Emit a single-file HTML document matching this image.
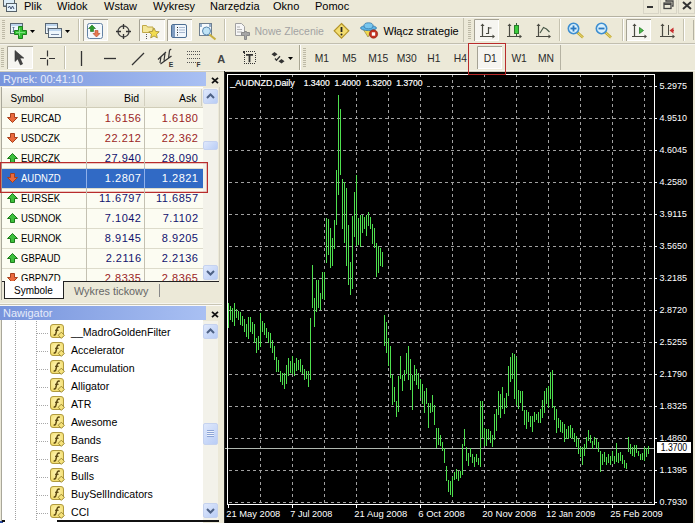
<!DOCTYPE html>
<html><head><meta charset="utf-8">
<style>
*{margin:0;padding:0;box-sizing:border-box}
html,body{width:695px;height:523px;overflow:hidden;background:#ece9d8;font-family:"Liberation Sans",sans-serif;font-size:11px;color:#000}
.abs{position:absolute}
.mi{position:absolute;top:0;height:15px;line-height:13px;font-size:11px}
.hline{position:absolute;left:0;width:695px;height:1px}
.grip{position:absolute;width:3px;background:repeating-linear-gradient(to bottom,#c1bda8 0 1px,transparent 1px 2px)}
.sep{position:absolute;width:1px;background:#c5c2b2;border-right:1px solid #fff}
.btnp{position:absolute;background:#f7f6f1;border:1px solid #d6d3c2}
.tf{position:absolute;top:52px;font-size:10px;line-height:12px;color:#222;letter-spacing:.3px}
.title{position:absolute;left:0;width:206px;height:14px;background:linear-gradient(to right,#7794dc,#a9c0f3);color:#e6ecfa;font-size:11px;line-height:13px;padding-left:3px;padding-top:1px}
.xclose{position:absolute;left:211px;font-size:11px;font-weight:bold;line-height:8px}
.row{position:absolute;left:2px;width:201px;height:20px;background:#fcfcf2}
.row .ar{position:absolute;left:5px;top:5px;line-height:0}
.row .sy{position:absolute;left:19px;top:5px;font-size:10px;line-height:12px;color:#000;transform:scaleX(.95);transform-origin:0 0}
.row .bid,.row .ask{position:absolute;top:4px;font-size:11px;line-height:12px;text-align:right;letter-spacing:.5px}
.row .bid{right:61.5px}
.row .ask{right:4.5px}
.row.dn .bid,.row.dn .ask{color:#9a2424}
.row.up .bid,.row.up .ask{color:#12126e}
.row.sel{background:#316ac5}
.row.sel .sy,.row.sel .bid,.row.sel .ask{color:#fff}
.vdiv{position:absolute;width:1px;background:#c4c1b2}
.hl{position:absolute;left:2px;width:201px;height:1px;background:#dddbcb;z-index:1}
.sb{position:absolute;left:203px;width:15px;background:#f3f2ea}
.sbb{position:absolute;left:203px;width:15px;height:15px;background:linear-gradient(135deg,#dfe8fb,#b9cdf6);border:1px solid #c5d2ef;border-radius:2px}
.ni{position:absolute;left:50px;height:18px}
.ni .ficon{position:absolute;left:0;top:0;line-height:0}
.ni .nt{position:absolute;left:21px;top:2px;font-size:10.6px;line-height:12px;white-space:nowrap}
.hdots{position:absolute;left:37px;width:12px;height:1px;background:repeating-linear-gradient(to right,#a8a8a8 0 1px,transparent 1px 2px)}
.vdots{position:absolute;width:1px;background:repeating-linear-gradient(to bottom,#a0a0a0 0 1px,transparent 1px 2px)}
</style></head><body>

<!-- menu bar -->
<svg class="abs" style="left:0;top:0" width="18" height="15" viewBox="0 0 18 15"><path d="M3.5 -1v7.5h3" fill="none" stroke="#556068"/><rect x="3.5" y="-2" width="11" height="8" fill="#dcecf7" stroke="#556068"/><rect x="6.5" y="3.5" width="10" height="8" fill="#e4f2fb" stroke="#556068"/><path d="M8 8l1.5-2 1.5 3 1.5-3 1.5 3" fill="none" stroke="#405070"/></svg>
<div class="mi" style="left:24px">Plik</div><div class="mi" style="left:57px">Widok</div><div class="mi" style="left:104px">Wstaw</div><div class="mi" style="left:153px">Wykresy</div><div class="mi" style="left:210px">Narzędzia</div><div class="mi" style="left:273px">Okno</div><div class="mi" style="left:315px">Pomoc</div>
<div class="abs" style="left:643px;top:0;width:16px;height:14px;border:1px solid #d8d5c6;border-top:0"></div>
<div class="abs" style="left:647px;top:6px;width:6px;height:2px;background:#333"></div>
<div class="abs" style="left:660px;top:0;width:17px;height:14px;border:1px solid #d8d5c6;border-top:0"></div>
<svg class="abs" style="left:663px;top:0" width="11" height="10" viewBox="0 0 11 10"><path d="M3 0v1h7v5h-1" fill="none" stroke="#444" stroke-width="1.3"/><rect x="1" y="3" width="7" height="5.5" fill="none" stroke="#444" stroke-width="1.3"/><path d="M1 4.2h7" stroke="#444" stroke-width="1.6"/></svg>
<div class="abs" style="left:678px;top:0;width:17px;height:14px;border:1px solid #d8d5c6;border-top:0"></div>
<svg class="abs" style="left:682px;top:1px" width="10" height="9" viewBox="0 0 10 9"><path d="M1 1l8 7M9 1l-8 7" stroke="#333" stroke-width="2"/></svg>
<div class="hline" style="top:16px;background:#b5b2a2"></div>
<div class="hline" style="top:17px;background:#fbfaf6"></div>

<!-- toolbar 1 -->
<svg class="abs" style="left:0;top:0" width="695" height="72" viewBox="0 0 695 72" font-family="Liberation Sans, sans-serif"><path d="M2 20h3v1h-3zM2 22h3v1h-3zM2 24h3v1h-3zM2 26h3v1h-3zM2 28h3v1h-3zM2 30h3v1h-3zM2 32h3v1h-3zM2 34h3v1h-3zM2 36h3v1h-3zM2 38h3v1h-3z" fill="#bdb9a6"/><rect x="10.5" y="23.5" width="12" height="10" fill="#eef6fb" stroke="#5a6672"/><rect x="11" y="24" width="11" height="2" fill="#bcd4ec"/><path d="M13.5 27v5M12.5 28l1-1 1 1M12.5 31l1 1 1-1" stroke="#5a7090" fill="none" stroke-width=".8"/><path d="M18.5 26.5h4v4h4v4h-4v4h-4v-4h-4v-4h4z" fill="#34c234" stroke="#1e7e1e"/><path d="M19.5 28v8M16 32.5h9" stroke="#7fe07f" stroke-width="1"/><path d="M30 30h5l-2.5 3z" fill="#000"/><rect x="45.5" y="23.5" width="12" height="10" fill="#eef6fb" stroke="#5a6672"/><rect x="46" y="24" width="11" height="2" fill="#bcd4ec"/><path d="M48 27.5v4M48 29.5h7" stroke="#5a7090" stroke-width=".8"/><rect x="48.5" y="28.5" width="13" height="9" fill="#eef6fb" stroke="#5a6672"/><rect x="49" y="29" width="12" height="2" fill="#bcd4ec"/><path d="M51 34.5h8" stroke="#5a7090" stroke-width=".8"/><path d="M65 30h5l-2.5 3z" fill="#000"/><path d="M78.5 19V41" stroke="#c5c2b0"/><path d="M79.5 19V41" stroke="#fff"/><rect x="83" y="19" width="25" height="22" fill="#f6f5f0"/><path d="M83.5 41V19.5H108" stroke="#a5a294" fill="none"/><path d="M84 40.5H107.5V20" stroke="#fff" fill="none"/><rect x="87.5" y="23.5" width="15" height="15" rx="2" fill="#f4f9fd" stroke="#6482a4"/><path d="M92 25l3.5 3.5h-2v3h-3v-3h-2z" fill="#2a9a2a" stroke="#1f6f1f" stroke-width=".6"/><path d="M96.5 37l3.5-3.5h-2v-3h-3v3h-2z" fill="#e87a50" stroke="#b04a2a" stroke-width=".6"/><circle cx="123.5" cy="31.5" r="5.5" fill="none" stroke="#444" stroke-width="1.3"/><path d="M123.5 24v5M123.5 34v5M116 31.5h5M126 31.5h5" stroke="#333" stroke-width="1.3"/><rect x="139" y="19" width="26" height="22" fill="#f6f5f0"/><path d="M139.5 41V19.5H165" stroke="#a5a294" fill="none"/><path d="M140 40.5H164.5V20" stroke="#fff" fill="none"/><path d="M142.5 25.5h4l1 1.5h5.5v5.5h-10.5z" fill="#f4e79a" stroke="#c0a848"/><path d="M154 28l1.6 3.4 3.6.4-2.7 2.5.8 3.6-3.3-1.9-3.3 1.9.8-3.6-2.7-2.5 3.6-.4z" fill="#f2dc50" stroke="#a08a30" stroke-width=".8"/><path d="M146.5 34v1M146.5 36v1M146.5 38v1" stroke="#555"/><rect x="167" y="19" width="25" height="22" fill="#f6f5f0"/><path d="M167.5 41V19.5H192" stroke="#a5a294" fill="none"/><path d="M168 40.5H191.5V20" stroke="#fff" fill="none"/><rect x="171.5" y="24.5" width="15" height="13" rx="1.5" fill="#f0f6fc" stroke="#4c6d92"/><rect x="172" y="25" width="3" height="12" fill="#7f9cc0"/><path d="M177 27.5h1M177 30h1M177 32.5h1M177 35h1" stroke="#222"/><path d="M179 27.5h6M179 30h6M179 32.5h6" stroke="#a8b8d0"/><rect x="199.5" y="23.5" width="12" height="12" fill="#f4f9fd" stroke="#708090"/><path d="M201 24v3M210 24v3" stroke="#3a6aa0"/><circle cx="206.5" cy="31" r="4" fill="#bfe3f6" stroke="#5a88b0"/><path d="M209.5 34.5l6 5" stroke="#c8b040" stroke-width="2.2"/><path d="M224.5 19V41" stroke="#c5c2b0"/><path d="M225.5 19V41" stroke="#fff"/><path d="M235.5 23.5h6l3 3v9h-9z" fill="#f6f6f6" stroke="#a0a0a0"/><path d="M237 27h3M237 29.5h5M237 32h5" stroke="#b0b0b0"/><path d="M241.5 32.5h3v-1h2v1h3v3h-3v4h-2v-4h-3z" fill="#a6a6a6" stroke="#8a8a8a"/><text x="254.5" y="34.5" font-size="10.5" fill="#a3a3a3">Nowe Zlecenie</text><path d="M341.5 23.5l7.3 7.3-7.3 7.3-7.3-7.3z" fill="#f3dd70" stroke="#b39428" stroke-width="1.2"/><path d="M341.5 27v5" stroke="#222" stroke-width="1.8"/><circle cx="341.5" cy="34.5" r="1" fill="#222"/><path d="M363 29l5 8 5-8z" fill="#f0d850" stroke="#8a7a30" stroke-width=".6"/><ellipse cx="368.5" cy="28" rx="8" ry="2.6" fill="#5ab4e6" stroke="#3a7aaa" stroke-width=".8"/><ellipse cx="368.5" cy="25.8" rx="4.5" ry="3" fill="#78c6ee" stroke="#3a7aaa" stroke-width=".8"/><circle cx="373.5" cy="34" r="4.2" fill="#c03020" stroke="#902010" stroke-width=".6"/><rect x="371.8" y="32.3" width="3.4" height="3.4" fill="#fff"/><text x="383.5" y="34.5" font-size="11" fill="#000">Włącz strategie</text><path d="M463.5 18V42" stroke="#c5c2b0"/><path d="M468 20h3v1h-3zM468 22h3v1h-3zM468 24h3v1h-3zM468 26h3v1h-3zM468 28h3v1h-3zM468 30h3v1h-3zM468 32h3v1h-3zM468 34h3v1h-3zM468 36h3v1h-3zM468 38h3v1h-3z" fill="#bdb9a6"/><rect x="474" y="19" width="25" height="22" fill="#f6f5f0"/><path d="M474.5 41V19.5H499" stroke="#a5a294" fill="none"/><path d="M475 40.5H498.5V20" stroke="#fff" fill="none"/><path d="M482.5 25V37M480 36.5H494" stroke="#4a4a42" stroke-width="1.2"/><path d="M482.5 23.5l-2 2.5h4z" fill="#4a4a42"/><path d="M495 36.5l-2.5-2v4z" fill="#4a4a42"/><path d="M488.5 27v7M486 33.5h2.5M488.5 28h3" stroke="#4a4a42" stroke-width="1.2"/><path d="M509.5 25V37M507 36.5H521" stroke="#4a4a42" stroke-width="1.2"/><path d="M509.5 23.5l-2 2.5h4z" fill="#4a4a42"/><path d="M522 36.5l-2.5-2v4z" fill="#4a4a42"/><path d="M516.5 23v13" stroke="#3a5a3a"/><rect x="514.5" y="25.5" width="4" height="8" fill="#3ccc3c" stroke="#2a7a2a"/><path d="M538.5 25V37M536 36.5H550" stroke="#4a4a42" stroke-width="1.2"/><path d="M538.5 23.5l-2 2.5h4z" fill="#4a4a42"/><path d="M551 36.5l-2.5-2v4z" fill="#4a4a42"/><path d="M540 33l3.5-5.5 3 1.5 3 3" fill="none" stroke="#4a5a4a" stroke-width="1.2"/><path d="M559.5 19V41" stroke="#c5c2b0"/><path d="M560.5 19V41" stroke="#fff"/><path d="M577.0 32.0l6 5.5" stroke="#c2aa30" stroke-width="2.6"/><path d="M577.0 32.0l6 5.5" stroke="#eede80" stroke-width="1"/><circle cx="573.5" cy="28.5" r="5.2" fill="#d8effb" stroke="#3d8ed0" stroke-width="1.6"/><path d="M570.5 28.5h6" stroke="#2a78c0" stroke-width="1.8"/><path d="M573.5 25.5v6" stroke="#2a78c0" stroke-width="1.8"/><path d="M605.0 32.0l6 5.5" stroke="#c2aa30" stroke-width="2.6"/><path d="M605.0 32.0l6 5.5" stroke="#eede80" stroke-width="1"/><circle cx="601.5" cy="28.5" r="5.2" fill="#d8effb" stroke="#3d8ed0" stroke-width="1.6"/><path d="M598.5 28.5h6" stroke="#2a78c0" stroke-width="1.8"/><path d="M622.5 19V41" stroke="#c5c2b0"/><path d="M623.5 19V41" stroke="#fff"/><rect x="626" y="19" width="25" height="22" fill="#f6f5f0"/><path d="M626.5 41V19.5H651" stroke="#a5a294" fill="none"/><path d="M627 40.5H650.5V20" stroke="#fff" fill="none"/><path d="M634.5 25V37M632 36.5H646" stroke="#4a4a42" stroke-width="1.2"/><path d="M634.5 23.5l-2 2.5h4z" fill="#4a4a42"/><path d="M647 36.5l-2.5-2v4z" fill="#4a4a42"/><path d="M639.5 27.5l4 3-4 3z" fill="#48b848" stroke="#2a7a2a" stroke-width=".8"/><path d="M662.5 25V37M660 36.5H674" stroke="#4a4a42" stroke-width="1.2"/><path d="M662.5 23.5l-2 2.5h4z" fill="#4a4a42"/><path d="M675 36.5l-2.5-2v4z" fill="#4a4a42"/><path d="M669.5 30.5l4-3v6z" fill="#c83030"/><path d="M672 30.5h2" stroke="#c83030" stroke-width="1.2"/><path d="M668.5 25v10" stroke="#4a4a42"/><path d="M683.5 19V41" stroke="#c5c2b0"/><path d="M684.5 19V41" stroke="#fff"/><path d="M693.5 20v20" stroke="#b5b2a2"/><path d="M1 48h3v1h-3zM1 50h3v1h-3zM1 52h3v1h-3zM1 54h3v1h-3zM1 56h3v1h-3zM1 58h3v1h-3zM1 60h3v1h-3zM1 62h3v1h-3zM1 64h3v1h-3zM1 66h3v1h-3z" fill="#bdb9a6"/><rect x="7" y="46" width="26" height="23" fill="#f6f5f0"/><path d="M7.5 69V46.5H33" stroke="#a5a294" fill="none"/><path d="M8 68.5H32.5V47" stroke="#fff" fill="none"/><path d="M15 50.5v11l2.8-2.6 2.6 6 2.2-1-2.6-5.8h3.8z" fill="#444" stroke="#333" stroke-width=".6"/><path d="M47.5 50.5v6M47.5 59.5v6M40 58.5h6M49 58.5h6" stroke="#333" stroke-width="1.2"/><path d="M64.5 46V69" stroke="#c5c2b0"/><path d="M65.5 46V69" stroke="#fff"/><path d="M81.5 51V66" stroke="#333" stroke-width="1.3"/><path d="M104 58.5H116" stroke="#333" stroke-width="1.3"/><path d="M132 65L144 53" stroke="#333" stroke-width="1.3"/><path d="M158 59.5L166 52M160.5 64L171.5 56M161 56.5L160 63M165 53.5L164 60.5M169.5 50.5L168.5 58.5M169.5 50.5q.8-1.3 1.8-1" stroke="#333" stroke-width="1.2" fill="none"/><text x="168.7" y="66.6" font-size="6.8" font-weight="bold" fill="#333">E</text><path d="M187 51.5h13M187 54.5h13M187 58.5h13M187 62.5h9" stroke="#555" stroke-dasharray="1 1"/><text x="196.5" y="66.5" font-size="6.5" font-weight="bold" fill="#333">F</text><text x="217.3" y="62.6" font-size="11" font-weight="bold" fill="#444">A</text><path d="M244 51h1v1h-1zM244 63h1v1h-1zM246 51h1v1h-1zM246 63h1v1h-1zM248 51h1v1h-1zM248 63h1v1h-1zM250 51h1v1h-1zM250 63h1v1h-1zM252 51h1v1h-1zM252 63h1v1h-1zM254 51h1v1h-1zM254 63h1v1h-1zM244 53h1v1h-1zM255 53h1v1h-1zM244 55h1v1h-1zM255 55h1v1h-1zM244 57h1v1h-1zM255 57h1v1h-1zM244 59h1v1h-1zM255 59h1v1h-1zM244 61h1v1h-1zM255 61h1v1h-1z" fill="#333"/><path d="M246 54.8h7M249.5 54.8v7.5" stroke="#333" stroke-width="1.8"/><path d="M243 51h2v2h-2z" fill="#333"/><path d="M274.5 52l3 2.3-3 2.3-3-2.3zM281.5 59l3 2.3-3 2.3-3-2.3z" fill="#333"/><path d="M275 58.5l1.5 1.8 3.5-4" stroke="#333" stroke-width="1.3" fill="none"/><path d="M288 57h5l-2.5 3z" fill="#000"/><path d="M299.5 45V70" stroke="#a9a693"/><path d="M300.5 45V70" stroke="#fff"/><path d="M303 48h3v1h-3zM303 50h3v1h-3zM303 52h3v1h-3zM303 54h3v1h-3zM303 56h3v1h-3zM303 58h3v1h-3zM303 60h3v1h-3zM303 62h3v1h-3zM303 64h3v1h-3zM303 66h3v1h-3z" fill="#bdb9a6"/><rect x="477" y="46" width="25" height="23" fill="#f6f5f0"/><path d="M477.5 69V46.5H502" stroke="#a5a294" fill="none"/><path d="M478 68.5H501.5V47" stroke="#fff" fill="none"/><text x="314.7" y="62" font-size="10.3" fill="#2a2a2a">M1</text><text x="342.3" y="62" font-size="10.3" fill="#2a2a2a">M5</text><text x="368.2" y="62" font-size="10.3" fill="#2a2a2a">M15</text><text x="396.7" y="62" font-size="10.3" fill="#2a2a2a">M30</text><text x="427.3" y="62" font-size="10.3" fill="#2a2a2a">H1</text><text x="453.8" y="62" font-size="10.3" fill="#2a2a2a">H4</text><text x="483.7" y="62" font-size="10.3" fill="#2a2a2a">D1</text><text x="511.4" y="62" font-size="10.3" fill="#2a2a2a">W1</text><text x="537.9" y="62" font-size="10.3" fill="#2a2a2a">MN</text><path d="M560.5 45V70" stroke="#b5b2a2"/></svg>
<div class="hline" style="top:43px;background:#c2bfb0"></div>
<div class="hline" style="top:44px;background:#f4f3ec"></div>

<!-- toolbar 2 -->

<div class="hline" style="top:70px;background:#f8f7f0"></div>
<div class="hline" style="top:71px;background:#d0cdbc"></div>

<!-- left dock -->
<div class="abs" style="left:0;top:72px;width:225px;height:451px;background:#ece9d8"></div>
<div class="abs" style="left:1px;top:87px;width:1px;height:213px;background:#a9a79a"></div>
<div class="title" style="top:72px">Rynek: 00:41:10</div>
<svg class="abs" style="left:211px;top:77px" width="8" height="7" viewBox="0 0 8 7"><path d="M1 .8l6 5.4M7 .8l-6 5.4" stroke="#111" stroke-width="1.8"/></svg>
<div class="abs" style="left:2px;top:87px;width:201px;height:21px;background:linear-gradient(#f6f5ec,#e9e7d8);border-top:1px solid #fff;border-bottom:1px solid #d0cdb8"></div>
<div class="abs" style="left:10.5px;top:93px;font-size:10px;line-height:12px">Symbol</div>
<div class="abs" style="left:124px;top:92px;font-size:10.5px;line-height:12px">Bid</div>
<div class="abs" style="left:179px;top:92px;font-size:10.5px;line-height:12px">Ask</div>
<div class="vdiv" style="left:86px;top:89px;height:17px;background:#d2cfbe"></div>
<div class="vdiv" style="left:144px;top:89px;height:17px;background:#d2cfbe"></div>
<div class="vdiv" style="left:201px;top:89px;height:17px;background:#d2cfbe"></div>
<div class="hl" style="top:128px"></div><div class="row dn" style="top:108px"><span class="ar"><svg width="11" height="10" viewBox="0 0 11 10"><path d="M3.5 .5h4v4h3l-5 5-5-5h3z" fill="#ea6a3c" stroke="#a8401c" stroke-width="1"/></svg></span><span class="sy">EURCAD</span><span class="bid">1.6156</span><span class="ask">1.6180</span></div><div class="hl" style="top:148px"></div><div class="row dn" style="top:128px"><span class="ar"><svg width="11" height="10" viewBox="0 0 11 10"><path d="M3.5 .5h4v4h3l-5 5-5-5h3z" fill="#ea6a3c" stroke="#a8401c" stroke-width="1"/></svg></span><span class="sy">USDCZK</span><span class="bid">22.212</span><span class="ask">22.362</span></div><div class="hl" style="top:168px"></div><div class="row up" style="top:148px"><span class="ar"><svg width="11" height="10" viewBox="0 0 11 10"><path d="M3.5 9.5h4v-4h3l-5-5-5 5h3z" fill="#3cbf3c" stroke="#1c7a1c" stroke-width="1"/></svg></span><span class="sy">EURCZK</span><span class="bid">27.940</span><span class="ask">28.090</span></div><div class="hl" style="top:188px"></div><div class="row sel dn" style="top:168px"><span class="ar"><svg width="11" height="10" viewBox="0 0 11 10"><path d="M3.5 .5h4v4h3l-5 5-5-5h3z" fill="#ea6a3c" stroke="#a8401c" stroke-width="1"/></svg></span><span class="sy">AUDNZD</span><span class="bid">1.2807</span><span class="ask">1.2821</span></div><div class="hl" style="top:208px"></div><div class="row up" style="top:188px"><span class="ar"><svg width="11" height="10" viewBox="0 0 11 10"><path d="M3.5 9.5h4v-4h3l-5-5-5 5h3z" fill="#3cbf3c" stroke="#1c7a1c" stroke-width="1"/></svg></span><span class="sy">EURSEK</span><span class="bid">11.6797</span><span class="ask">11.6857</span></div><div class="hl" style="top:228px"></div><div class="row up" style="top:208px"><span class="ar"><svg width="11" height="10" viewBox="0 0 11 10"><path d="M3.5 9.5h4v-4h3l-5-5-5 5h3z" fill="#3cbf3c" stroke="#1c7a1c" stroke-width="1"/></svg></span><span class="sy">USDNOK</span><span class="bid">7.1042</span><span class="ask">7.1102</span></div><div class="hl" style="top:248px"></div><div class="row up" style="top:228px"><span class="ar"><svg width="11" height="10" viewBox="0 0 11 10"><path d="M3.5 9.5h4v-4h3l-5-5-5 5h3z" fill="#3cbf3c" stroke="#1c7a1c" stroke-width="1"/></svg></span><span class="sy">EURNOK</span><span class="bid">8.9145</span><span class="ask">8.9205</span></div><div class="hl" style="top:268px"></div><div class="row up" style="top:248px"><span class="ar"><svg width="11" height="10" viewBox="0 0 11 10"><path d="M3.5 9.5h4v-4h3l-5-5-5 5h3z" fill="#3cbf3c" stroke="#1c7a1c" stroke-width="1"/></svg></span><span class="sy">GBPAUD</span><span class="bid">2.2116</span><span class="ask">2.2136</span></div><div class="row dn" style="top:268px"><span class="ar"><svg width="11" height="10" viewBox="0 0 11 10"><path d="M3.5 .5h4v4h3l-5 5-5-5h3z" fill="#ea6a3c" stroke="#a8401c" stroke-width="1"/></svg></span><span class="sy">GBPNZD</span><span class="bid">2.8335</span><span class="ask">2.8365</span></div>
<div class="vdiv" style="left:86px;top:108px;height:173px;z-index:2"></div>
<div class="vdiv" style="left:144px;top:108px;height:173px;z-index:2"></div>
<div class="sb" style="top:88px;height:193px"></div>
<div class="sbb" style="top:89px"></div>
<svg class="abs" style="left:206px;top:93px" width="9" height="6" viewBox="0 0 9 6"><path d="M1 5l3.5-3.5L8 5" fill="none" stroke="#4d6185" stroke-width="2"/></svg>
<div class="sbb" style="top:141px;height:9px"></div>
<div class="sbb" style="top:265px"></div>
<svg class="abs" style="left:206px;top:270px" width="9" height="6" viewBox="0 0 9 6"><path d="M1 1l3.5 3.5L8 1" fill="none" stroke="#4d6185" stroke-width="2"/></svg>
<div class="abs" style="left:219px;top:87px;width:1px;height:194px;background:#d4d1c2"></div>
<!-- tabs -->
<div class="abs" style="left:2px;top:281px;width:217px;height:19px;background:#ece9d8;border-top:1px solid #222"></div>
<div class="abs" style="left:4px;top:281px;width:60px;height:18px;background:#fff;border:1px solid #222;border-top:0"></div>
<div class="abs" style="left:14px;top:285px;font-size:10px;line-height:12px">Symbole</div>
<div class="abs" style="left:74px;top:285px;font-size:10.8px;line-height:12px;color:#666">Wykres tickowy</div>
<div class="abs" style="left:159px;top:284px;width:1px;height:13px;background:#888"></div>
<div class="hline" style="top:303px;width:222px;background:#f6f5ee"></div>
<div class="hline" style="top:304px;width:222px;background:#c8c5b4"></div>
<div class="hline" style="top:305px;width:222px;background:#fbfaf6"></div>

<!-- navigator -->
<div class="title" style="top:306px">Nawigator</div>
<svg class="abs" style="left:211px;top:311px" width="8" height="7" viewBox="0 0 8 7"><path d="M1 .8l6 5.4M7 .8l-6 5.4" stroke="#111" stroke-width="1.8"/></svg>
<div class="abs" style="left:1px;top:320px;width:202px;height:203px;background:#fff;border-left:1px solid #a9a79a"></div>
<div class="vdots" style="left:15px;top:321px;height:199px"></div>
<div class="vdots" style="left:36px;top:321px;height:199px"></div>
<div class="ni" style="top:324px"><span class="ficon"><svg width="16" height="16" viewBox="0 0 16 16"><defs><radialGradient id="fg" cx=".45" cy=".4" r=".7"><stop offset="0" stop-color="#fff6b8"/><stop offset="1" stop-color="#f0d860"/></radialGradient></defs><rect x=".5" y=".5" width="13" height="13" rx="2.5" fill="url(#fg)" stroke="#b09a40"/><path d="M9.8 3.3c-1.2-.6-2.3 0-2.7 1.3L5.8 9.8c-.3 1-1.1 1.4-2.1 1" stroke="#5c4810" stroke-width="1.5" fill="none"/><path d="M5 6.3h3.6" stroke="#5c4810" stroke-width="1.2"/><path d="M11.3 8.2l3.1 3.1-3.1 3.1-3.1-3.1z" fill="#f6e27a" stroke="#9c8a38"/></svg></span><span class="nt">__MadroGoldenFilter</span></div><div class="hdots" style="top:333px"></div><div class="ni" style="top:342px"><span class="ficon"><svg width="16" height="16" viewBox="0 0 16 16"><defs><radialGradient id="fg" cx=".45" cy=".4" r=".7"><stop offset="0" stop-color="#fff6b8"/><stop offset="1" stop-color="#f0d860"/></radialGradient></defs><rect x=".5" y=".5" width="13" height="13" rx="2.5" fill="url(#fg)" stroke="#b09a40"/><path d="M9.8 3.3c-1.2-.6-2.3 0-2.7 1.3L5.8 9.8c-.3 1-1.1 1.4-2.1 1" stroke="#5c4810" stroke-width="1.5" fill="none"/><path d="M5 6.3h3.6" stroke="#5c4810" stroke-width="1.2"/><path d="M11.3 8.2l3.1 3.1-3.1 3.1-3.1-3.1z" fill="#f6e27a" stroke="#9c8a38"/></svg></span><span class="nt">Accelerator</span></div><div class="hdots" style="top:351px"></div><div class="ni" style="top:360px"><span class="ficon"><svg width="16" height="16" viewBox="0 0 16 16"><defs><radialGradient id="fg" cx=".45" cy=".4" r=".7"><stop offset="0" stop-color="#fff6b8"/><stop offset="1" stop-color="#f0d860"/></radialGradient></defs><rect x=".5" y=".5" width="13" height="13" rx="2.5" fill="url(#fg)" stroke="#b09a40"/><path d="M9.8 3.3c-1.2-.6-2.3 0-2.7 1.3L5.8 9.8c-.3 1-1.1 1.4-2.1 1" stroke="#5c4810" stroke-width="1.5" fill="none"/><path d="M5 6.3h3.6" stroke="#5c4810" stroke-width="1.2"/><path d="M11.3 8.2l3.1 3.1-3.1 3.1-3.1-3.1z" fill="#f6e27a" stroke="#9c8a38"/></svg></span><span class="nt">Accumulation</span></div><div class="hdots" style="top:369px"></div><div class="ni" style="top:378px"><span class="ficon"><svg width="16" height="16" viewBox="0 0 16 16"><defs><radialGradient id="fg" cx=".45" cy=".4" r=".7"><stop offset="0" stop-color="#fff6b8"/><stop offset="1" stop-color="#f0d860"/></radialGradient></defs><rect x=".5" y=".5" width="13" height="13" rx="2.5" fill="url(#fg)" stroke="#b09a40"/><path d="M9.8 3.3c-1.2-.6-2.3 0-2.7 1.3L5.8 9.8c-.3 1-1.1 1.4-2.1 1" stroke="#5c4810" stroke-width="1.5" fill="none"/><path d="M5 6.3h3.6" stroke="#5c4810" stroke-width="1.2"/><path d="M11.3 8.2l3.1 3.1-3.1 3.1-3.1-3.1z" fill="#f6e27a" stroke="#9c8a38"/></svg></span><span class="nt">Alligator</span></div><div class="hdots" style="top:387px"></div><div class="ni" style="top:396px"><span class="ficon"><svg width="16" height="16" viewBox="0 0 16 16"><defs><radialGradient id="fg" cx=".45" cy=".4" r=".7"><stop offset="0" stop-color="#fff6b8"/><stop offset="1" stop-color="#f0d860"/></radialGradient></defs><rect x=".5" y=".5" width="13" height="13" rx="2.5" fill="url(#fg)" stroke="#b09a40"/><path d="M9.8 3.3c-1.2-.6-2.3 0-2.7 1.3L5.8 9.8c-.3 1-1.1 1.4-2.1 1" stroke="#5c4810" stroke-width="1.5" fill="none"/><path d="M5 6.3h3.6" stroke="#5c4810" stroke-width="1.2"/><path d="M11.3 8.2l3.1 3.1-3.1 3.1-3.1-3.1z" fill="#f6e27a" stroke="#9c8a38"/></svg></span><span class="nt">ATR</span></div><div class="hdots" style="top:405px"></div><div class="ni" style="top:414px"><span class="ficon"><svg width="16" height="16" viewBox="0 0 16 16"><defs><radialGradient id="fg" cx=".45" cy=".4" r=".7"><stop offset="0" stop-color="#fff6b8"/><stop offset="1" stop-color="#f0d860"/></radialGradient></defs><rect x=".5" y=".5" width="13" height="13" rx="2.5" fill="url(#fg)" stroke="#b09a40"/><path d="M9.8 3.3c-1.2-.6-2.3 0-2.7 1.3L5.8 9.8c-.3 1-1.1 1.4-2.1 1" stroke="#5c4810" stroke-width="1.5" fill="none"/><path d="M5 6.3h3.6" stroke="#5c4810" stroke-width="1.2"/><path d="M11.3 8.2l3.1 3.1-3.1 3.1-3.1-3.1z" fill="#f6e27a" stroke="#9c8a38"/></svg></span><span class="nt">Awesome</span></div><div class="hdots" style="top:423px"></div><div class="ni" style="top:432px"><span class="ficon"><svg width="16" height="16" viewBox="0 0 16 16"><defs><radialGradient id="fg" cx=".45" cy=".4" r=".7"><stop offset="0" stop-color="#fff6b8"/><stop offset="1" stop-color="#f0d860"/></radialGradient></defs><rect x=".5" y=".5" width="13" height="13" rx="2.5" fill="url(#fg)" stroke="#b09a40"/><path d="M9.8 3.3c-1.2-.6-2.3 0-2.7 1.3L5.8 9.8c-.3 1-1.1 1.4-2.1 1" stroke="#5c4810" stroke-width="1.5" fill="none"/><path d="M5 6.3h3.6" stroke="#5c4810" stroke-width="1.2"/><path d="M11.3 8.2l3.1 3.1-3.1 3.1-3.1-3.1z" fill="#f6e27a" stroke="#9c8a38"/></svg></span><span class="nt">Bands</span></div><div class="hdots" style="top:441px"></div><div class="ni" style="top:450px"><span class="ficon"><svg width="16" height="16" viewBox="0 0 16 16"><defs><radialGradient id="fg" cx=".45" cy=".4" r=".7"><stop offset="0" stop-color="#fff6b8"/><stop offset="1" stop-color="#f0d860"/></radialGradient></defs><rect x=".5" y=".5" width="13" height="13" rx="2.5" fill="url(#fg)" stroke="#b09a40"/><path d="M9.8 3.3c-1.2-.6-2.3 0-2.7 1.3L5.8 9.8c-.3 1-1.1 1.4-2.1 1" stroke="#5c4810" stroke-width="1.5" fill="none"/><path d="M5 6.3h3.6" stroke="#5c4810" stroke-width="1.2"/><path d="M11.3 8.2l3.1 3.1-3.1 3.1-3.1-3.1z" fill="#f6e27a" stroke="#9c8a38"/></svg></span><span class="nt">Bears</span></div><div class="hdots" style="top:459px"></div><div class="ni" style="top:468px"><span class="ficon"><svg width="16" height="16" viewBox="0 0 16 16"><defs><radialGradient id="fg" cx=".45" cy=".4" r=".7"><stop offset="0" stop-color="#fff6b8"/><stop offset="1" stop-color="#f0d860"/></radialGradient></defs><rect x=".5" y=".5" width="13" height="13" rx="2.5" fill="url(#fg)" stroke="#b09a40"/><path d="M9.8 3.3c-1.2-.6-2.3 0-2.7 1.3L5.8 9.8c-.3 1-1.1 1.4-2.1 1" stroke="#5c4810" stroke-width="1.5" fill="none"/><path d="M5 6.3h3.6" stroke="#5c4810" stroke-width="1.2"/><path d="M11.3 8.2l3.1 3.1-3.1 3.1-3.1-3.1z" fill="#f6e27a" stroke="#9c8a38"/></svg></span><span class="nt">Bulls</span></div><div class="hdots" style="top:477px"></div><div class="ni" style="top:486px"><span class="ficon"><svg width="16" height="16" viewBox="0 0 16 16"><defs><radialGradient id="fg" cx=".45" cy=".4" r=".7"><stop offset="0" stop-color="#fff6b8"/><stop offset="1" stop-color="#f0d860"/></radialGradient></defs><rect x=".5" y=".5" width="13" height="13" rx="2.5" fill="url(#fg)" stroke="#b09a40"/><path d="M9.8 3.3c-1.2-.6-2.3 0-2.7 1.3L5.8 9.8c-.3 1-1.1 1.4-2.1 1" stroke="#5c4810" stroke-width="1.5" fill="none"/><path d="M5 6.3h3.6" stroke="#5c4810" stroke-width="1.2"/><path d="M11.3 8.2l3.1 3.1-3.1 3.1-3.1-3.1z" fill="#f6e27a" stroke="#9c8a38"/></svg></span><span class="nt">BuySellIndicators</span></div><div class="hdots" style="top:495px"></div><div class="ni" style="top:504px"><span class="ficon"><svg width="16" height="16" viewBox="0 0 16 16"><defs><radialGradient id="fg" cx=".45" cy=".4" r=".7"><stop offset="0" stop-color="#fff6b8"/><stop offset="1" stop-color="#f0d860"/></radialGradient></defs><rect x=".5" y=".5" width="13" height="13" rx="2.5" fill="url(#fg)" stroke="#b09a40"/><path d="M9.8 3.3c-1.2-.6-2.3 0-2.7 1.3L5.8 9.8c-.3 1-1.1 1.4-2.1 1" stroke="#5c4810" stroke-width="1.5" fill="none"/><path d="M5 6.3h3.6" stroke="#5c4810" stroke-width="1.2"/><path d="M11.3 8.2l3.1 3.1-3.1 3.1-3.1-3.1z" fill="#f6e27a" stroke="#9c8a38"/></svg></span><span class="nt">CCI</span></div><div class="hdots" style="top:513px"></div>
<div class="sb" style="top:321px;height:199px"></div>
<div class="sbb" style="top:324px"></div>
<svg class="abs" style="left:206px;top:328px" width="9" height="6" viewBox="0 0 9 6"><path d="M1 5l3.5-3.5L8 5" fill="none" stroke="#4d6185" stroke-width="2"/></svg>
<div class="sbb" style="top:423px;height:22px"></div>
<div class="abs" style="left:207px;top:430px;width:7px;height:7px;background:repeating-linear-gradient(to bottom,#8ca4d6 0 1px,#eef3fc 1px 2px)"></div>
<div class="sbb" style="top:503px"></div>
<svg class="abs" style="left:206px;top:508px" width="9" height="6" viewBox="0 0 9 6"><path d="M1 1l3.5 3.5L8 1" fill="none" stroke="#4d6185" stroke-width="2"/></svg>
<div class="abs" style="left:57px;top:520px;width:162px;height:2px;background:#111"></div>
<div class="abs" style="left:0;top:521px;width:3px;height:2px;background:#2a4aa0"></div>
<div class="abs" style="left:2px;top:520px;width:3px;height:2px;background:#111"></div>
<!-- splitter -->
<div class="abs" style="left:224px;top:71px;width:1px;height:452px;background:#222"></div>

<!-- chart -->
<div class="abs" style="left:225px;top:72px;width:470px;height:451px"><svg id="chart" width="470" height="451" viewBox="225 72 470 451">
<rect x="225" y="72" width="470" height="451" fill="#000"/>
<path d="M229 86.5H654M229 118.5H654M229 150.5H654M229 182.5H654M229 214.5H654M229 246.5H654M229 278.5H654M229 310.5H654M229 342.5H654M229 374.5H654M229 406.5H654M229 438.5H654M229 470.5H654M229 502.5H654M260.5 74V504M292.5 74V504M324.5 74V504M356.5 74V504M388.5 74V504M420.5 74V504M452.5 74V504M484.5 74V504M516.5 74V504M548.5 74V504M580.5 74V504M612.5 74V504M644.5 74V504" stroke="#a0a0a0" stroke-width="1" stroke-dasharray="3 3" fill="none" shape-rendering="crispEdges"/>
<rect x="228" y="79" width="196" height="9" fill="#000"/>
<path d="M225 448.5H654" stroke="#b0b8b0" stroke-width="1" shape-rendering="crispEdges"/>
<path d="M228.5 303V328M230.5 306V320M232.5 308V322M234.5 303V326M236.5 309V318M238.5 311V320M240.5 312V325M242.5 316V326M244.5 319V332M246.5 324V337M248.5 317V339M250.5 317V332M252.5 322V334M254.5 324V343M256.5 338V353M258.5 336V350M260.5 313V347M262.5 321V332M264.5 323V335M266.5 328V338M268.5 332V343M270.5 333V348M272.5 340V353M274.5 346V360M276.5 357V372M278.5 360V372M280.5 371V382M282.5 373V385M284.5 373V389M286.5 365V384M288.5 358V376M290.5 361V373M292.5 356V374M294.5 363V376M296.5 358V371M298.5 360V370M300.5 359V372M302.5 365V374M304.5 369V380M306.5 371V379M308.5 371V387M310.5 318V380M312.5 265V308M314.5 298V327M316.5 280V312M318.5 280V308M320.5 293V310M322.5 272V299M324.5 272V300M326.5 218V263M328.5 219V255M330.5 228V268M332.5 238V266M334.5 220V249M336.5 170V225M338.5 95V195M340.5 109V175M342.5 179V229M344.5 182V243M346.5 188V266M348.5 225V285M350.5 262V295M352.5 216V289M354.5 192V237M356.5 175V246M358.5 218V245M360.5 215V247M362.5 215V233M364.5 217V229M366.5 215V236M368.5 212V226M370.5 217V229M372.5 224V244M374.5 228V248M376.5 243V277M378.5 246V273M380.5 248V266M382.5 252V267M384.5 315V346M386.5 322V353M388.5 338V366M390.5 346V378M392.5 375V405M394.5 387V402M396.5 401V417M398.5 376V412M400.5 356V379M402.5 375V391M404.5 370V381M406.5 353V374M408.5 346V380M410.5 359V390M412.5 375V410M414.5 365V381M416.5 369V385M418.5 373V389M420.5 379V398M422.5 384V404M424.5 391V413M426.5 388V404M428.5 403V428M430.5 403V413M432.5 395V412M434.5 405V425M436.5 428V448M438.5 428V445M440.5 435V446M442.5 442V451M444.5 448V463M446.5 466V481M448.5 480V492M450.5 481V495M452.5 477V497M454.5 472V480M456.5 469V479M458.5 471V481M460.5 471V478M462.5 444V475M464.5 429V446M466.5 447V461M468.5 453V466M470.5 448V457M472.5 454V463M474.5 457V467M476.5 454V462M478.5 458V465M480.5 401V467M482.5 401V438M484.5 428V446M486.5 429V446M488.5 429V440M490.5 431V443M492.5 435V447M494.5 414V440M496.5 409V431M498.5 391V415M500.5 394V418M502.5 387V409M504.5 398V414M506.5 393V408M508.5 366V396M510.5 357V382M512.5 353V379M514.5 354V399M516.5 357V405M518.5 390V409M520.5 391V403M522.5 391V411M524.5 410V425M526.5 410V429M528.5 412V422M530.5 416V427M532.5 416V432M534.5 412V422M536.5 414V420M538.5 412V423M540.5 409V423M542.5 400V418M544.5 391V413M546.5 388V404M548.5 386V408M550.5 372V399M552.5 370V408M554.5 406V420M556.5 409V433M558.5 418V428M560.5 420V432M562.5 422V433M564.5 424V442M566.5 429V439M568.5 426V439M570.5 425V438M572.5 428V439M574.5 433V442M576.5 436V447M578.5 439V454M580.5 447V457M582.5 447V465M584.5 444V456M586.5 437V449M588.5 430V441M590.5 435V443M592.5 441V449M594.5 437V445M596.5 439V448M598.5 442V452M600.5 451V472M602.5 454V465M604.5 452V462M606.5 457V465M608.5 454V463M610.5 456V465M612.5 451V461M614.5 456V464M616.5 443V462M618.5 453V463M620.5 452V461M622.5 455V464M624.5 460V468M626.5 463V469M628.5 437V452M630.5 444V454M632.5 447V456M634.5 445V457M636.5 445V453M638.5 451V456M640.5 454V460M642.5 453V460M644.5 447V461M646.5 448V457M648.5 446V454" stroke="#4ee04e" stroke-width="1" fill="none" shape-rendering="crispEdges"/>
<rect x="227.5" y="74.5" width="427" height="430" fill="none" stroke="#fff" stroke-width="1" shape-rendering="crispEdges"/>
<path d="M654 86h3v1h-3zM654 118h3v1h-3zM654 150h3v1h-3zM654 182h3v1h-3zM654 214h3v1h-3zM654 246h3v1h-3zM654 278h3v1h-3zM654 310h3v1h-3zM654 342h3v1h-3zM654 374h3v1h-3zM654 406h3v1h-3zM654 438h3v1h-3zM654 470h3v1h-3zM654 502h3v1h-3zM228 504h1v4h-1zM292 504h1v4h-1zM356 504h1v4h-1zM420 504h1v4h-1zM484 504h1v4h-1zM548 504h1v4h-1zM612 504h1v4h-1z" fill="#fff" shape-rendering="crispEdges"/>
<g font-family="Liberation Sans, sans-serif" font-size="9.5" fill="#fff">
<text x="659.5" y="89" textLength="27.5" lengthAdjust="spacingAndGlyphs">5.2975</text><text x="659.5" y="121" textLength="27.5" lengthAdjust="spacingAndGlyphs">4.9510</text><text x="659.5" y="153" textLength="27.5" lengthAdjust="spacingAndGlyphs">4.6045</text><text x="659.5" y="185" textLength="27.5" lengthAdjust="spacingAndGlyphs">4.2580</text><text x="659.5" y="217" textLength="27.5" lengthAdjust="spacingAndGlyphs">3.9115</text><text x="659.5" y="249" textLength="27.5" lengthAdjust="spacingAndGlyphs">3.5650</text><text x="659.5" y="281" textLength="27.5" lengthAdjust="spacingAndGlyphs">3.2185</text><text x="659.5" y="313" textLength="27.5" lengthAdjust="spacingAndGlyphs">2.8720</text><text x="659.5" y="345" textLength="27.5" lengthAdjust="spacingAndGlyphs">2.5255</text><text x="659.5" y="377" textLength="27.5" lengthAdjust="spacingAndGlyphs">2.1790</text><text x="659.5" y="409" textLength="27.5" lengthAdjust="spacingAndGlyphs">1.8325</text><text x="659.5" y="441" textLength="27.5" lengthAdjust="spacingAndGlyphs">1.4860</text><text x="659.5" y="473" textLength="27.5" lengthAdjust="spacingAndGlyphs">1.1395</text><text x="659.5" y="505" textLength="27.5" lengthAdjust="spacingAndGlyphs">0.7930</text><text x="226.3" y="517" textLength="54" lengthAdjust="spacingAndGlyphs">21 May 2008</text><text x="290.3" y="517" textLength="42" lengthAdjust="spacingAndGlyphs">7 Jul 2008</text><text x="354.3" y="517" textLength="53" lengthAdjust="spacingAndGlyphs">21 Aug 2008</text><text x="418.3" y="517" textLength="46.5" lengthAdjust="spacingAndGlyphs">6 Oct 2008</text><text x="482.3" y="517" textLength="54" lengthAdjust="spacingAndGlyphs">20 Nov 2008</text><text x="546.3" y="517" textLength="49" lengthAdjust="spacingAndGlyphs">12 Jan 2009</text><text x="610.3" y="517" textLength="52.5" lengthAdjust="spacingAndGlyphs">25 Feb 2009</text>
<text stroke="#fff" stroke-width=".2" x="230.3" y="86" textLength="64.5" lengthAdjust="spacingAndGlyphs">_AUDNZD,Daily</text>
<text stroke="#fff" stroke-width=".2" x="303.7" y="86" textLength="26.2" lengthAdjust="spacingAndGlyphs">1.3400</text>
<text stroke="#fff" stroke-width=".2" x="334.6" y="86" textLength="26.2" lengthAdjust="spacingAndGlyphs">1.4000</text>
<text stroke="#fff" stroke-width=".2" x="365.4" y="86" textLength="26.2" lengthAdjust="spacingAndGlyphs">1.3200</text>
<text stroke="#fff" stroke-width=".2" x="396.3" y="86" textLength="26.2" lengthAdjust="spacingAndGlyphs">1.3700</text>
</g>
<rect x="657" y="442" width="34" height="11" fill="#fff"/>
<text x="660.7" y="451" font-family="Liberation Sans, sans-serif" font-size="10" fill="#000" textLength="26.5" lengthAdjust="spacingAndGlyphs">1.3700</text>
</svg></div>
<div class="abs" style="left:693px;top:71px;width:2px;height:452px;background:#ece9d8"></div>

<!-- red annotation boxes -->
<div class="abs" style="left:0;top:162px;width:208px;height:31px;border:1px solid #b82c2c;box-shadow:inset 0 0 0 .5px rgba(184,44,44,.5)"></div>
<div class="abs" style="left:468px;top:43px;width:38px;height:32px;border:1px solid #b82c2c"></div>
<div class="abs" style="left:86px;top:168px;width:1px;height:20px;background:#8fb0ea;z-index:3"></div>
<div class="abs" style="left:144px;top:168px;width:1px;height:20px;background:#8fb0ea;z-index:3"></div>
</body></html>
